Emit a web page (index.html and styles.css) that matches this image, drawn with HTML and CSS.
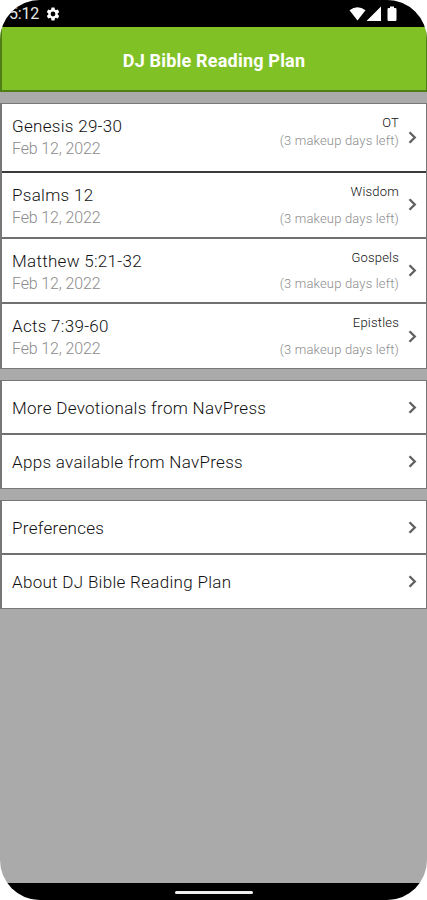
FILE: index.html
```
<!DOCTYPE html>
<html lang="en">
<head>
<meta charset="utf-8">
<meta name="viewport" content="width=device-width, initial-scale=1">
<title>DJ Bible Reading Plan</title>
<link rel="stylesheet" href="styles.css">
</head>
<body>
<div class="screen">
  <div class="status">
    <span class="time">5:12</span>
    <svg class="gear" width="16" height="16" viewBox="0 0 24 24"><path fill="#fff" d="M19.14 12.94c.04-.3.06-.61.06-.94s-.02-.64-.07-.94l2.03-1.58a.49.49 0 0 0 .12-.61l-1.92-3.32a.49.49 0 0 0-.59-.22l-2.39.96a7 7 0 0 0-1.62-.94l-.36-2.54a.48.48 0 0 0-.48-.41h-3.84a.47.47 0 0 0-.47.41l-.36 2.54c-.59.24-1.13.57-1.62.94l-2.39-.96a.48.48 0 0 0-.59.22L2.74 8.87a.47.47 0 0 0 .12.61l2.03 1.58a6 6 0 0 0 0 1.88l-2.03 1.58a.49.49 0 0 0-.12.61l1.92 3.32c.12.22.37.29.59.22l2.39-.96c.5.38 1.03.7 1.62.94l.36 2.54c.05.24.24.41.48.41h3.84c.24 0 .44-.17.47-.41l.36-2.54a7 7 0 0 0 1.62-.94l2.39.96c.22.08.47 0 .59-.22l1.92-3.32a.47.47 0 0 0-.12-.61zM12 15.6A3.6 3.6 0 1 1 12 8.400a3.600 3.600 0 0 1 0 7.200z"/></svg>
    <svg class="signals" width="50" height="18" viewBox="0 0 50 18" fill="#fff"><path d="M.5 5.300Q8.500-.8 16.500 5.300L8.500 15.500z"/><path d="M32 1.500V16H17.500z"/><path d="M41 1.500h4v1.500h1.300a1.200 1.200 0 0 1 1.200 1.200v10.600a1.200 1.200 0 0 1-1.200 1.200h-6.600a1.200 1.200 0 0 1-1.200-1.200V4.200a1.200 1.200 0 0 1 1.200-1.200h1.300z"/></svg>
  </div>
  <header class="header"><h1 class="title">DJ Bible Reading Plan</h1></header>
  <main class="content">
    <section class="group">
      <a class="row reading first">
        <span class="main"><span class="name">Genesis 29-30</span><span class="date">Feb 12, 2022</span></span>
        <span class="side"><span class="kind">OT</span><span class="left">(3 makeup days left)</span></span>
        <svg class="chevron" width="9" height="13" viewBox="0 0 9 13"><path d="M1.500 1.200l5.300 5.300-5.300 5.300"/></svg>
      </a>
      <a class="row reading">
        <span class="main"><span class="name">Psalms 12</span><span class="date">Feb 12, 2022</span></span>
        <span class="side"><span class="kind">Wisdom</span><span class="left">(3 makeup days left)</span></span>
        <svg class="chevron" width="9" height="13" viewBox="0 0 9 13"><path d="M1.500 1.200l5.300 5.300-5.300 5.300"/></svg>
      </a>
      <a class="row reading">
        <span class="main"><span class="name">Matthew 5:21-32</span><span class="date">Feb 12, 2022</span></span>
        <span class="side"><span class="kind">Gospels</span><span class="left">(3 makeup days left)</span></span>
        <svg class="chevron" width="9" height="13" viewBox="0 0 9 13"><path d="M1.500 1.200l5.300 5.300-5.300 5.300"/></svg>
      </a>
      <a class="row reading">
        <span class="main"><span class="name">Acts 7:39-60</span><span class="date">Feb 12, 2022</span></span>
        <span class="side"><span class="kind">Epistles</span><span class="left">(3 makeup days left)</span></span>
        <svg class="chevron" width="9" height="13" viewBox="0 0 9 13"><path d="M1.500 1.200l5.300 5.300-5.300 5.300"/></svg>
      </a>
    </section>
    <section class="group">
      <a class="row link"><span class="name">More Devotionals from NavPress</span><svg class="chevron" width="9" height="13" viewBox="0 0 9 13"><path d="M1.500 1.200l5.300 5.300-5.300 5.300"/></svg></a>
      <a class="row link"><span class="name">Apps available from NavPress</span><svg class="chevron" width="9" height="13" viewBox="0 0 9 13"><path d="M1.500 1.200l5.300 5.300-5.300 5.300"/></svg></a>
    </section>
    <section class="group">
      <a class="row link"><span class="name">Preferences</span><svg class="chevron" width="9" height="13" viewBox="0 0 9 13"><path d="M1.500 1.200l5.300 5.300-5.300 5.300"/></svg></a>
      <a class="row link"><span class="name">About DJ Bible Reading Plan</span><svg class="chevron" width="9" height="13" viewBox="0 0 9 13"><path d="M1.500 1.200l5.300 5.300-5.300 5.300"/></svg></a>
    </section>
  </main>
  <footer class="navbar"><span class="handle"></span></footer>
</div>
</body>
</html>
```
FILE: styles.css
```
* { box-sizing: border-box; }
body { margin: 0; background: #fff; font-family: Roboto, sans-serif; }
.screen {
  width: 427px;
  height: 900px;
  display: flex;
  flex-direction: column;
  overflow: hidden;
  border-radius: 40px;
  background: #aaa;
}
.status {
  height: 27px;
  flex: none;
  display: flex;
  align-items: center;
  padding: 0 9px;
  background: #000;
  color: #e8e8e8;
}
.time { width: 36px; font-size: 16px; line-height: 27px; letter-spacing: -.2px; white-space: nowrap; }
.gear { flex: none; }
.signals { margin-left: auto; margin-right: 19px; }
.header {
  height: 65px;
  flex: none;
  display: flex;
  align-items: center;
  justify-content: center;
  background: #80c226;
  border: solid #4f7d17;
  border-width: 0 1px 2px 2px;
}
.title { margin: 4px 0 0; color: #fff; font-size: 18px; line-height: 24px; font-weight: 700; letter-spacing: .2px; white-space: nowrap; }
.content { flex: 1; display: flex; flex-direction: column; gap: 11px; padding-top: 11px; }
.group { border: solid #777; border-width: 1px 1px 1px 2px; background: #fff; }
.row { display: flex; padding-left: 10px; padding-right: 9px; }
.row + .row { border-top: 2px solid #707070; }
.first + .row { border-top-color: #3c3c3c; }
.reading { height: 65.700px; }
.first { height: 67px; }
.main { flex: 1; display: flex; flex-direction: column; padding-top: 11px; }
.name { color: #111; font-size: 17px; line-height: 22px; font-weight: 300; letter-spacing: .3px; white-space: nowrap; }
.date { margin-top: 1px; color: #8c8c8c; font-size: 16px; line-height: 22px; font-weight: 300; letter-spacing: -.14px; }
.side { display: flex; flex-direction: column; justify-content: space-between; align-items: flex-end; padding: 10px 0 9px; }
.kind { color: #111; font-size: 13px; line-height: 18px; letter-spacing: .2px; font-weight: 300; }
.left { color: #8c8c8c; font-size: 13px; line-height: 18px; letter-spacing: .17px; font-weight: 300; }
.first .side { justify-content: flex-start; }
.chevron { align-self: center; flex: none; margin-left: 9px; fill: none; stroke: #606060; stroke-width: 2.300; }
.link { height: 52px; align-items: center; justify-content: space-between; padding-top: 1px; }
.link + .link { height: 55px; padding-top: 0; padding-bottom: 0; }
.navbar { height: 17px; flex: none; display: flex; align-items: center; justify-content: center; background: #000; }
.handle { width: 78px; height: 3px; margin-top: 2px; border-radius: 2px; background: #eee; }
```
